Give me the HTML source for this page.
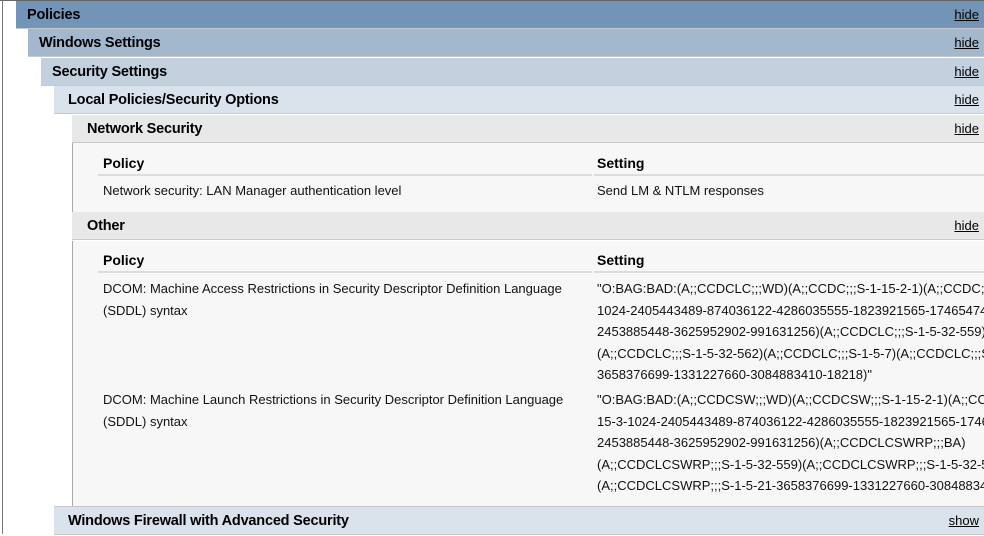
<!DOCTYPE html>
<html><head><style>
*{margin:0;padding:0;box-sizing:border-box}
body{width:984px;height:534px;background:#fff;font-family:"Liberation Sans",Arial,sans-serif;color:#000;position:relative;overflow:hidden}
.h{position:absolute;right:0;height:28px;border-bottom:1px solid #c8c8c8;font-weight:bold;font-size:14.5px;line-height:29px;letter-spacing:-0.2px}
.h a{position:absolute;right:5px;top:0;font-weight:normal;font-size:13px;line-height:28px;letter-spacing:0;color:#000;text-decoration:underline}
.c{position:absolute;left:72px;right:0;background:#f7f7f7;border-left:1px solid #aaa}
.t{position:absolute;font-size:13px;white-space:nowrap;color:#111;overflow:hidden}
.s{width:387px}
.th{position:absolute;font-size:14px;font-weight:bold}
.u{position:absolute;height:2px;background:#dcdcdc}
</style></head><body>
<div style="position:absolute;left:0;top:0;width:984px;height:1px;background:#666"></div>
<div style="position:absolute;left:2px;top:0;width:1px;height:534px;background:#777"></div>
<div class="h" style="left:16px;top:1px;background:#7294b7;padding-left:11px">Policies<a>hide</a></div>
<div class="h" style="left:28px;top:29px;background:#a3b8cd;padding-left:11px">Windows Settings<a>hide</a></div>
<div class="h" style="left:41px;top:58px;background:#c3d1df;padding-left:11px">Security Settings<a>hide</a></div>
<div class="h" style="left:54px;top:86px;background:#dae3ec;padding-left:14px">Local Policies/Security Options<a>hide</a></div>
<div class="h" style="left:72px;top:115px;background:#e8e8e8;padding-left:15px">Network Security<a>hide</a></div>
<div class="c" style="top:143px;height:69px"></div>
<div class="th" style="left:103px;top:155px">Policy</div>
<div class="th" style="left:597px;top:155px">Setting</div>
<div class="u" style="left:98px;width:494px;top:174px"></div>
<div class="u" style="left:594px;right:0;top:174px"></div>
<div class="t" style="left:103px;top:183px">Network security: LAN Manager authentication level</div>
<div class="t" style="left:597px;top:183px">Send LM &amp; NTLM responses</div>
<div class="h" style="left:72px;top:212px;background:#e8e8e8;padding-left:15px">Other<a>hide</a></div>
<div class="c" style="top:241px;height:265px"></div>
<div class="th" style="left:103px;top:252px">Policy</div>
<div class="th" style="left:597px;top:252px">Setting</div>
<div class="u" style="left:98px;width:494px;top:271px"></div>
<div class="u" style="left:594px;right:0;top:271px"></div>
<div class="t" style="left:103px;top:278px;line-height:21.5px">DCOM: Machine Access Restrictions in Security Descriptor Definition Language<br>(SDDL) syntax</div>
<div class="t s" style="left:597px;top:278px;line-height:21.5px">"O:BAG:BAD:(A;;CCDCLC;;;WD)(A;;CCDC;;;S-1-15-2-1)(A;;CCDC;;;S-1-15-3-<br>1024-2405443489-874036122-4286035555-1823921565-1746547431-<br>2453885448-3625952902-991631256)(A;;CCDCLC;;;S-1-5-32-559)<br>(A;;CCDCLC;;;S-1-5-32-562)(A;;CCDCLC;;;S-1-5-7)(A;;CCDCLC;;;S-1-5-21-<br>3658376699-1331227660-3084883410-18218)"</div>
<div class="t" style="left:103px;top:389px;line-height:21.5px">DCOM: Machine Launch Restrictions in Security Descriptor Definition Language<br>(SDDL) syntax</div>
<div class="t s" style="left:597px;top:389px;line-height:21.5px">"O:BAG:BAD:(A;;CCDCSW;;;WD)(A;;CCDCSW;;;S-1-15-2-1)(A;;CCDCSW;;;S-1-<br>15-3-1024-2405443489-874036122-4286035555-1823921565-1746547431-<br>2453885448-3625952902-991631256)(A;;CCDCLCSWRP;;;BA)<br>(A;;CCDCLCSWRP;;;S-1-5-32-559)(A;;CCDCLCSWRP;;;S-1-5-32-562)<br>(A;;CCDCLCSWRP;;;S-1-5-21-3658376699-1331227660-3084883410-18218)"</div>
<div class="h" style="left:54px;top:506px;background:#dae3ec;padding-left:14px;border-top:1px solid #c8c8c8;height:29px">Windows Firewall with Advanced Security<a>show</a></div>
</body></html>
